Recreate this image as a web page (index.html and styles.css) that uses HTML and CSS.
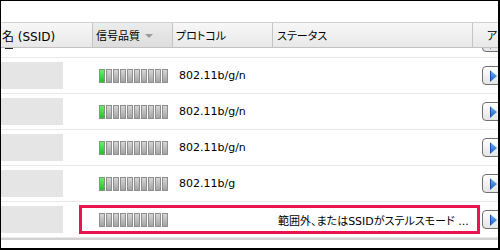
FILE: index.html
```html
<!DOCTYPE html>
<html lang="ja">
<head>
<meta charset="utf-8">
<title>ワイヤレスネットワーク</title>
<link rel="stylesheet" href="styles.css">
</head>
<body>
<div class="frame">
  <div class="toparea"></div>
  <div class="table">
    <div class="row first">
      <div class="c name"><span class="dash"></span></div>
      <div class="c sig"><span class="bars"><i class="on"></i><i></i><i></i><i></i><i></i><i></i><i></i><i></i><i></i><i></i></span></div>
      <div class="c proto"></div>
      <div class="c status"></div>
      <div class="c act"><span class="btn"><svg viewBox="0 0 7 12" width="7" height="12"><defs><linearGradient id="g0" x1="0" y1="0" x2="0" y2="1"><stop offset="0" stop-color="#6cb6f5"/><stop offset="1" stop-color="#1b5fc4"/></linearGradient></defs><polygon points="0,0 7,6 0,12" fill="url(#g0)"/></svg></span></div>
    </div>
    <div class="row">
      <div class="c name"><span class="redact"></span></div>
      <div class="c sig"><span class="bars"><i class="on"></i><i></i><i></i><i></i><i></i><i></i><i></i><i></i><i></i><i></i></span></div>
      <div class="c proto">802.11b/g/n</div>
      <div class="c status"></div>
      <div class="c act"><span class="btn"><svg viewBox="0 0 7 12" width="7" height="12"><polygon points="0,0 7,6 0,12" fill="url(#g0)"/><rect x="0" y="1" width="1" height="10" fill="#1a4fa0"/></svg></span></div>
    </div>
    <div class="row">
      <div class="c name"><span class="redact"></span></div>
      <div class="c sig"><span class="bars"><i class="on"></i><i></i><i></i><i></i><i></i><i></i><i></i><i></i><i></i><i></i></span></div>
      <div class="c proto">802.11b/g/n</div>
      <div class="c status"></div>
      <div class="c act"><span class="btn"><svg viewBox="0 0 7 12" width="7" height="12"><polygon points="0,0 7,6 0,12" fill="url(#g0)"/><rect x="0" y="1" width="1" height="10" fill="#1a4fa0"/></svg></span></div>
    </div>
    <div class="row">
      <div class="c name"><span class="redact"></span></div>
      <div class="c sig"><span class="bars"><i class="on"></i><i></i><i></i><i></i><i></i><i></i><i></i><i></i><i></i><i></i></span></div>
      <div class="c proto">802.11b/g/n</div>
      <div class="c status"></div>
      <div class="c act"><span class="btn"><svg viewBox="0 0 7 12" width="7" height="12"><polygon points="0,0 7,6 0,12" fill="url(#g0)"/><rect x="0" y="1" width="1" height="10" fill="#1a4fa0"/></svg></span></div>
    </div>
    <div class="row">
      <div class="c name"><span class="redact"></span></div>
      <div class="c sig"><span class="bars"><i class="on"></i><i></i><i></i><i></i><i></i><i></i><i></i><i></i><i></i><i></i></span></div>
      <div class="c proto">802.11b/g</div>
      <div class="c status"></div>
      <div class="c act"><span class="btn"><svg viewBox="0 0 7 12" width="7" height="12"><polygon points="0,0 7,6 0,12" fill="url(#g0)"/><rect x="0" y="1" width="1" height="10" fill="#1a4fa0"/></svg></span></div>
    </div>
    <div class="row">
      <div class="c name"><span class="redact"></span></div>
      <div class="c sig"><span class="bars"><i></i><i></i><i></i><i></i><i></i><i></i><i></i><i></i><i></i><i></i></span></div>
      <div class="c proto"></div>
      <div class="c status">範囲外、またはSSIDがステルスモード ...</div>
      <div class="c act"><span class="btn"><svg viewBox="0 0 7 12" width="7" height="12"><polygon points="0,0 7,6 0,12" fill="url(#g0)"/><rect x="0" y="1" width="1" height="10" fill="#1a4fa0"/></svg></span></div>
    </div>
    <div class="tfoot"></div>

    <div class="thead">
      <div class="h name">名 (SSID)</div>
      <div class="h sig sorted">信号品質<span class="arrow"></span></div>
      <div class="h proto">プロトコル</div>
      <div class="h status">ステータス</div>
      <div class="h act">ア</div>
    </div>
  </div>
  <div class="highlight"></div>
</div>
</body>
</html>
```

FILE: styles.css
```css
html, body {
  margin: 0;
  padding: 0;
  background: #fff;
}

.frame {
  position: relative;
  width: 500px;
  height: 250px;
  box-sizing: border-box;
  border-style: solid;
  border-color: #000;
  border-width: 1px 2px 2px 1px;
  overflow: hidden;
  background: #fff;
  font-family: "DejaVu Sans", "Noto Sans CJK JP", sans-serif;
  font-feature-settings: "palt";
  color: #000;
}

.toparea {
  height: 21px;
}

.table {
  position: relative;
}

.row,
.thead {
  display: grid;
  grid-template-columns: 92px 80px 100px 200px 1fr;
}

.row {
  height: 35px;
  border-bottom: 1px solid #e9e9e9;
  align-items: center;
  font-size: 11px;
}

.row .c {
  display: flex;
  align-items: center;
  white-space: nowrap;
  overflow: hidden;
}

.row .sig { padding-left: 6px; }
.row .proto { padding-left: 6px; }
.row .status { padding-left: 5px; font-size: 11px; }
.row .act { padding-left: 9px; overflow: visible; }

.redact {
  display: block;
  width: 62px;
  height: 27px;
  background: #e5e5e5;
}

.bars {
  display: flex;
  gap: 1px;
}

.bars i {
  display: block;
  width: 6px;
  height: 14px;
  box-sizing: border-box;
  border: 1px solid #8f8f8f;
  background: linear-gradient(#d6d6d6, #a4a4a4);
}

.bars i.on {
  border-color: #7a9a7a;
  background: linear-gradient(#66f266, #22c422);
}

.btn {
  display: flex;
  align-items: center;
  width: 26px;
  height: 19px;
  box-sizing: border-box;
  padding-left: 7px;
  border: 1px solid #707070;
  border-radius: 4px;
  background: linear-gradient(#ffffff, #e4e4e4);
}

.btn svg { display: block; }

/* first row is scrolled mostly under the header */
.row.first { align-items: start; }
.row.first .c { align-items: flex-start; }
.row.first .sig { padding-top: 12px; }
.row.first .act { padding-top: 11px; }
.row.first .name { padding-top: 26px; padding-left: 4px; }

.dash {
  display: block;
  width: 8px;
  height: 1px;
  background: #222;
}

.tfoot {
  height: 2px;
  background: #d2d2d2;
}

.thead {
  position: absolute;
  top: 0;
  left: 0;
  right: 0;
  height: 26px;
  box-sizing: border-box;
  border-top: 1px solid #d0d0d0;
  border-bottom: 1px solid #c2c2c2;
  background: linear-gradient(#f7f7f7, #e8e8e8);
  font-size: 11px;
}

.h {
  display: flex;
  align-items: center;
  box-sizing: border-box;
  border-right: 1px solid #c4c4c4;
  white-space: nowrap;
  overflow: hidden;
}

.h.name { padding-left: 1px; font-size: 12px; }
.h.sig { padding-left: 3px; }
.h.proto { padding-left: 3px; }
.h.status { padding-left: 4px; }
.h.act { padding-left: 14px; border-right: 0; }

.h.sorted {
  background: linear-gradient(#ececec, #dddddd);
  border-left: 0;
}

.arrow {
  display: block;
  width: 0;
  height: 0;
  margin-left: 5px;
  margin-top: 1px;
  border-left: 4px solid transparent;
  border-right: 4px solid transparent;
  border-top: 4px solid #9a9a9a;
}

.highlight {
  position: absolute;
  left: 78px;
  top: 204px;
  width: 401px;
  height: 29px;
  box-sizing: border-box;
  border: 3px solid #ec1450;
  pointer-events: none;
}
```
